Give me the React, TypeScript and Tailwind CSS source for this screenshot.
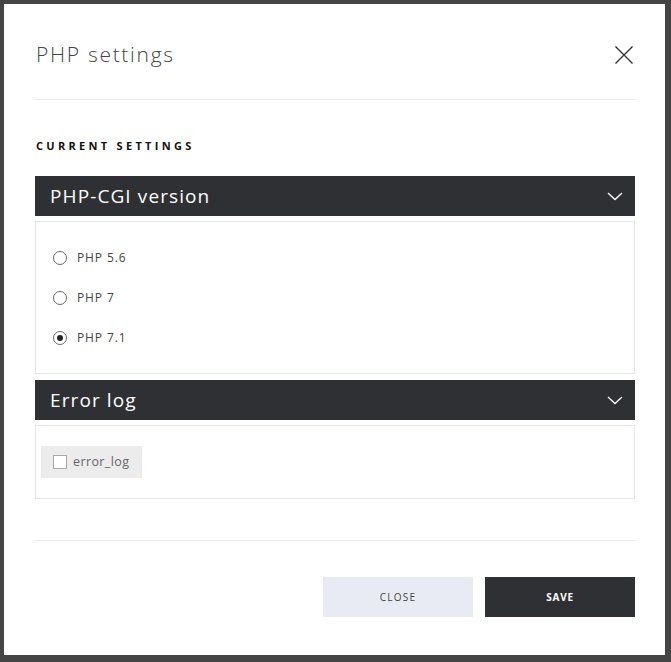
import React from "react";

const versions = [
  { label: "PHP 5.6", checked: false },
  { label: "PHP 7", checked: false },
  { label: "PHP 7.1", checked: true },
];

function Chevron() {
  return (
    <svg className="h-[10px] w-[16px]" viewBox="0 0 16 10" fill="none" stroke="white" strokeWidth={1.3}>
      <path d="M1 2l7 6.5L15 2" />
    </svg>
  );
}

function SectionHeader({ title }: { title: string }) {
  return (
    <div className="flex h-[40px] items-center justify-between bg-[#2f3033] pl-[15px] pr-[12px]">
      <span className="font-['Open_Sans',sans-serif] text-[19px] leading-none tracking-[1.1px] text-white">
        {title}
      </span>
      <Chevron />
    </div>
  );
}

export default function App() {
  return (
    <div className="h-[662px] w-[671px] bg-[#454545] pb-[7px] pl-[4px] pr-[6px] pt-[4px] font-['Open_Sans',sans-serif]">
      <div className="flex h-full flex-col bg-white pl-[31px] pr-[30px]">
        {/* Header */}
        <div className="flex h-[96px] items-center justify-between border-b border-[#e9e9ec] pl-[1px] pt-[6px]">
          <h1 className="text-[21px] font-light tracking-[1.7px] text-[#444]">PHP settings</h1>
          <svg className="mr-[1px] h-[20px] w-[20px]" viewBox="0 0 20 20" fill="none" stroke="#333" strokeWidth={1.4}>
            <path d="M1.5 1.5l17 17M18.5 1.5l-17 17" />
          </svg>
        </div>

        <h2 className="mt-[39px] pl-[1px] text-[11px] font-bold leading-[14px] tracking-[3.3px] text-[#111]">
          CURRENT SETTINGS
        </h2>

        {/* PHP-CGI version */}
        <div className="mt-[23px]">
          <SectionHeader title="PHP-CGI version" />
          <div className="mt-[5px] flex h-[153px] flex-col gap-[27px] border border-[#e6e7ee] pl-[17px] pt-[29px]">
            {versions.map((v) => (
              <label key={v.label} className="flex h-[13px] items-center gap-[10px]">
                <span className="flex h-[14px] w-[14px] items-center justify-center rounded-full border border-[#6b6b6b]">
                  {v.checked && <span className="h-[6px] w-[6px] rounded-full bg-[#222]" />}
                </span>
                <span className="text-[12px] tracking-[0.9px] text-[#444]">{v.label}</span>
              </label>
            ))}
          </div>
        </div>

        {/* Error log */}
        <div className="mt-[6px]">
          <SectionHeader title="Error log" />
          <div className="mt-[5px] flex h-[74px] items-center border border-[#e6e7ee] pl-[5px]">
            <div className="flex h-[32px] w-[101px] items-center gap-[6px] bg-[#ececec] pl-[12px]">
              <span className="h-[14px] w-[14px] border border-[#a8a8a8] bg-white" />
              <span className="text-[12.5px] tracking-[0.4px] text-[#666]">error_log</span>
            </div>
          </div>
        </div>

        <div className="mt-[41px] border-b border-[#e9e9ec]" />

        {/* Footer */}
        <div className="mt-[36px] flex justify-end gap-[12px]">
          <button className="h-[40px] w-[150px] bg-[#e8ebf3] text-[10px] tracking-[1.2px] text-[#444]">
            CLOSE
          </button>
          <button className="h-[40px] w-[150px] bg-[#2f3033] text-[10px] font-bold tracking-[0.8px] text-white">
            SAVE
          </button>
        </div>
      </div>
    </div>
  );
}
